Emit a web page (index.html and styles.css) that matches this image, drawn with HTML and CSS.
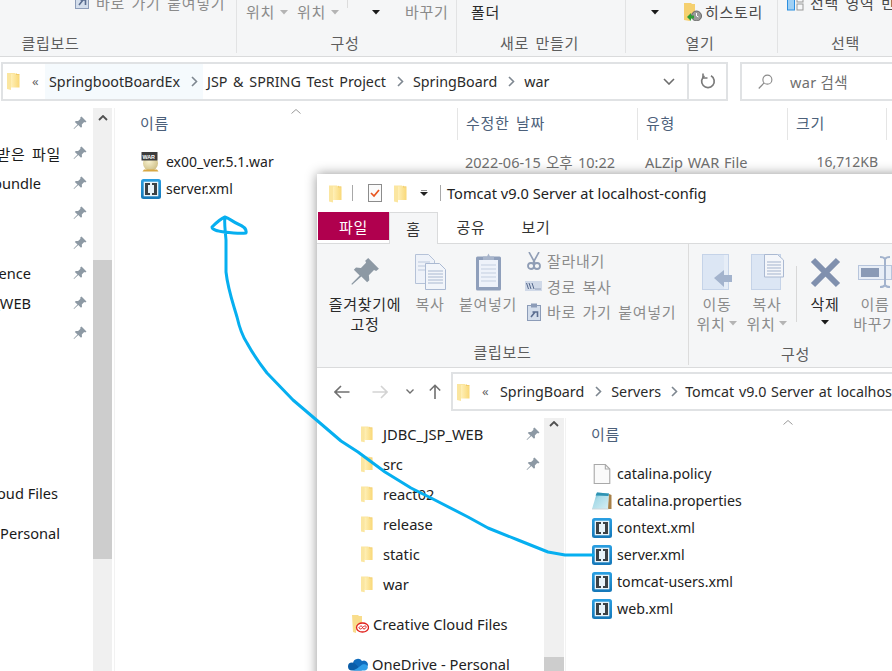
FILE: index.html
```html
<!DOCTYPE html>
<html lang="ko">
<head>
<meta charset="utf-8">
<title>Explorer windows</title>
<link rel="stylesheet" href="styles.css">
</head>
<body>
<svg class="defs" width="0" height="0" aria-hidden="true">
  <defs>
    <linearGradient id="fg" x1="0" x2="1" y1="0" y2="0"><stop offset="0" stop-color="#fff0b8"/><stop offset="1" stop-color="#f9d877"/></linearGradient>
    <linearGradient id="xb" x1="0" x2="0" y1="0" y2="1"><stop offset="0" stop-color="#2a9fe2"/><stop offset="1" stop-color="#1577b8"/></linearGradient>
    <linearGradient id="nb" x1="0" x2="1" y1="0" y2="1"><stop offset="0" stop-color="#3fa6c4"/><stop offset=".35" stop-color="#a9dbe8"/><stop offset="1" stop-color="#d8eff4"/></linearGradient>
    <radialGradient id="eg" cx=".4" cy=".35" r=".7"><stop offset="0" stop-color="#f8f2d0"/><stop offset="1" stop-color="#cdbd84"/></radialGradient>
    <symbol id="folder" viewBox="0 0 13 18">
      <path d="M0 1h8l1 1h3v13l-8 0v3l-4-1z" fill="#fbe6a0"/>
      <path d="M4 2h5l1 1h2.500v12.500H4z" fill="url(#fg)"/>
      <path d="M9 1v2h3.500v-1H10z" fill="#f2cc6a"/>
    </symbol>
    <symbol id="pin" viewBox="0 0 14 14">
      <path d="M8.500 0.500l5 5-1.300 1-1-.4-2.400 2.400.2 2.300-1 1-2.700-2.700L1 13l-.4-.4 3.900-4-2.700-2.700 1-1 2.300.2L7.500 2.700 7.100 1.700z" fill="#8d99a4"/>
    </symbol>
    <symbol id="xml" viewBox="0 0 20 20">
      <rect width="20" height="20" rx="2.500" fill="url(#xb)"/>
      <rect x="2.700" y="2.700" width="14.600" height="14.600" fill="#e9f3f9"/>
      <path d="M4 4h5v2H7v8h2v2H4z" fill="#3b4145"/>
      <path d="M16 4h-5v2h2v8h-2v2h5z" fill="#3b4145"/>
    </symbol>
    <symbol id="war" viewBox="0 0 20 20">
      <ellipse cx="9.500" cy="11.500" rx="7.500" ry="7.500" fill="url(#eg)"/>
      <path d="M3 17.500h13l1.500 2h-16z" fill="#d8a845"/>
      <rect x="0.500" y="0" width="16" height="8.500" fill="#3c3c3c"/>
      <text x="1.400" y="6.800" class="war-text">WAR</text>
    </symbol>
    <symbol id="doc" viewBox="0 0 15 18">
      <path d="M.5.500h10l4 4v13H.500z" fill="#fafafa" stroke="#a9a9a9"/>
      <path d="M10.500.500v4h4" fill="none" stroke="#a9a9a9"/>
    </symbol>
    <symbol id="note" viewBox="0 0 20 18">
      <path d="M5 0.500L17 1.500 16 17H0z" fill="url(#nb)"/>
      <path d="M5 0.500L17 1.500 16.500 4 3.500 3.500z" fill="#2f93b3"/>
      <path d="M17 2l2.500 1v14L16 17z" fill="#a8814a"/>
      <path d="M0 16.500h16.500v1H0z" fill="#cfd6da"/>
    </symbol>
    <symbol id="down" viewBox="0 0 8 5"><path d="M0 0h8L4 4.500z" fill="currentColor"/></symbol>
    <symbol id="chev" viewBox="0 0 7 11"><path d="M1 1l4.500 4.500L1 10" fill="none" stroke="#7e8790" stroke-width="1.600"/></symbol>
  </defs>
</svg>

<main class="screen">
  <section class="window back">
    <div class="ribbon-short">
      <div class="sgroup w236">
        <div class="sitems pl75">
          <svg class="ic-shortcut raise" viewBox="0 0 14 18"><rect x=".5" y="2.500" width="13" height="15" fill="#d4deec" stroke="#8c9cb8"/><rect x="4" y="0.500" width="6" height="4" fill="#8c9cb8"/><path d="M4 14l4-5H5.500h5v5" fill="none" stroke="#5a6d90" stroke-width="1.600"/></svg>
          <span class="tx dim raise ml7 wide">바로 가기 붙여넣기</span>
        </div>
        <div class="glabel clip">클립보드</div>
      </div>
      <div class="sgroup w220">
        <div class="sitems pl9">
          <span class="tx dim wide">위치</span><svg class="drop lt ml5"><use href="#down"/></svg>
          <span class="tx dim ml9 wide">위치</span><svg class="drop lt ml5"><use href="#down"/></svg>
          <span class="minisep"></span>
          <svg class="drop dk ml24"><use href="#down"/></svg>
          <span class="tx dim ml25 wide">바꾸기</span>
        </div>
        <div class="glabel">구성</div>
      </div>
      <div class="sgroup w169">
        <div class="sitems pl14"><span class="tx dark wide">폴더</span></div>
        <div class="glabel">새로 만들기</div>
      </div>
      <div class="sgroup w152">
        <div class="sitems pl25">
          <svg class="drop dk"><use href="#down"/></svg>
          <svg class="ic-history ml25" viewBox="0 0 18 18">
            <path d="M0 0h7l1 1h3v10H6v7l-6-1z" fill="#f5d06f"/>
            <circle cx="12.500" cy="13" r="5" fill="#9a9a9a" stroke="#666"/>
            <path d="M12.500 10v3l2 1" stroke="#fff" fill="none"/>
            <path d="M3 14l4-4v2.500h3v3H7V18z" fill="#2f9e35"/>
          </svg>
          <span class="tx mid ml3 wide">히스토리</span>
        </div>
        <div class="glabel">열기</div>
      </div>
      <div class="sgroup w138 nosep">
        <div class="sitems pl9">
          <svg class="ic-select" viewBox="0 0 17 11"><rect x=".5" y="-4" width="7" height="14" fill="#9fd0f5" stroke="#2d8fe0"/><rect x="10" y="-4" width="6" height="6" fill="none" stroke="#999"/><rect x="10" y="4" width="6" height="6" fill="none" stroke="#999"/></svg>
          <span class="tx mid raise ml6 wide">선택 영역 반전</span>
        </div>
        <div class="glabel">선택</div>
      </div>
    </div>

    <div class="navbar back-nav">
      <div class="address back-address">
        <svg class="fold-addr"><use href="#folder"/></svg>
        <span class="dbl">«</span>
        <span class="crumb-hover"><span class="crumb">SpringbootBoardEx</span><svg class="chev"><use href="#chev"/></svg></span>
        <span class="crumb ml4">JSP &amp; SPRING Test Project</span><svg class="chev cgap"><use href="#chev"/></svg>
        <span class="crumb">SpringBoard</span><svg class="chev cgap"><use href="#chev"/></svg>
        <span class="crumb">war</span>
        <span class="addr-end">
          <svg class="addr-drop" viewBox="0 0 12 7"><path d="M1 1l5 5 5-5" fill="none" stroke="#6d6d6d" stroke-width="1.600"/></svg>
          <span class="refresh">
            <svg viewBox="0 0 16 16" class="ic-refresh"><path d="M11 2.800A6.300 6.300 0 1 1 4.500 3" fill="none" stroke="#7a7a7a" stroke-width="1.700"/><path d="M3 .5v4.500h4.500" fill="none" stroke="#7a7a7a" stroke-width="1.600"/></svg>
          </span>
        </span>
      </div>
      <div class="search">
        <svg class="ic-search" viewBox="0 0 16 16"><circle cx="10" cy="6" r="4.800" fill="none" stroke="#8a8a8a" stroke-width="1.200"/><path d="M6.500 9.500L.8 15.500" stroke="#8a8a8a" stroke-width="1.300"/></svg>
        <span class="search-text">war 검색</span>
      </div>
    </div>

    <div class="main">
      <nav class="side back-side">
        <div class="srow"><span class="slabel"></span><svg class="pin"><use href="#pin"/></svg></div>
        <div class="srow"><span class="slabel ko">카카오톡 받은 파일</span><svg class="pin"><use href="#pin"/></svg></div>
        <div class="srow"><span class="slabel e41">Spring bundle</span><svg class="pin"><use href="#pin"/></svg></div>
        <div class="srow"><span class="slabel"></span><svg class="pin"><use href="#pin"/></svg></div>
        <div class="srow"><span class="slabel"></span><svg class="pin"><use href="#pin"/></svg></div>
        <div class="srow"><span class="slabel e30">Conference</span><svg class="pin"><use href="#pin"/></svg></div>
        <div class="srow"><span class="slabel e30">JDBC_JSP_WEB</span><svg class="pin"><use href="#pin"/></svg></div>
        <div class="srow"><span class="slabel"></span><svg class="pin"><use href="#pin"/></svg></div>
        <div class="srow mt130"><span class="slabel e58">Creative Cloud Files</span></div>
        <div class="srow mt10"><span class="slabel e60">OneDrive - Personal</span></div>
      </nav>
      <div class="scrollbar back-scroll">
        <div class="sb-up"><svg viewBox="0 0 10 6" class="sb-chev"><path d="M1 5l4-4 4 4" fill="none" stroke="#505050" stroke-width="1.800"/></svg></div>
        <div class="sb-thumb"></div>
      </div>
      <div class="pane back-pane">
        <div class="head">
          <svg class="sort back-sort" viewBox="0 0 10 5"><path d="M.5 4.500L5 .5l4.500 4" fill="none" stroke="#9a9a9a"/></svg>
          <span class="hcell hname">이름</span>
          <span class="hcell hdate">수정한 날짜</span>
          <span class="hcell htype">유형</span>
          <span class="hcell hsize">크기</span>
        </div>
        <div class="frow first">
          <svg class="ficon"><use href="#war"/></svg>
          <span class="fname">ex00_ver.5.1.war</span>
          <span class="fdate">2022-06-15 오후 10:22</span>
          <span class="ftype">ALZip WAR File</span>
          <span class="fsize">16,712KB</span>
        </div>
        <div class="frow">
          <svg class="ficon"><use href="#xml"/></svg>
          <span class="fname">server.xml</span>
        </div>
      </div>
    </div>
  </section>

  <section class="window front">
    <header class="titlebar">
      <svg class="t-folder"><use href="#folder"/></svg>
      <span class="tsep"></span>
      <svg class="t-check" viewBox="0 0 14 18"><rect x=".5" y=".5" width="13" height="17" fill="#fbfbfb" stroke="#8c8c8c"/><path d="M3 9l3 3 5-6" fill="none" stroke="#e8551f" stroke-width="1.700"/></svg>
      <svg class="t-folder t2"><use href="#folder"/></svg>
      <svg class="t-drop" viewBox="0 0 8 6"><path d="M1 0h6" stroke="#222"/><path d="M0 2h8L4 6z" fill="#222"/></svg>
      <span class="tsep s2"></span>
      <span class="ttitle">Tomcat v9.0 Server at localhost-config</span>
    </header>
    <div class="tabs">
      <span class="tab file">파일</span>
      <span class="tab home">홈</span>
      <span class="tab share">공유</span>
      <span class="tab view">보기</span>
    </div>
    <div class="ribbon-full">
      <div class="bgroup g1">
        <div class="bitems">
          <div class="bbtn b-pin">
            <div class="bicon"><svg class="i-bigpin"><use href="#pin"/></svg></div>
            <span class="blabel dark">즐겨찾기에<br>고정</span>
          </div>
          <div class="bbtn b-copy">
            <div class="bicon"><svg class="i-copy" viewBox="0 0 31 36">
              <path d="M.5.500h13l6 6v23H.500z" fill="#eef2f9" stroke="#b5c2d8"/><path d="M3 8h12M3 12h13M3 16h13" stroke="#bcc8dc"/>
              <path d="M10.500 9.500h14l6 6v20h-20z" fill="#f2f5fa" stroke="#aab9d2"/><path d="M13 17h15M13 20h15M13 23h15M13 26h15M13 29h15" stroke="#a9b8d0"/>
            </svg></div>
            <span class="blabel dim">복사</span>
          </div>
          <div class="bbtn b-paste">
            <div class="bicon"><svg class="i-paste" viewBox="0 0 27 38">
              <rect x="1" y="3.500" width="25" height="34" rx="1.500" fill="#8f9fbb"/>
              <rect x="4" y="7" width="19" height="27" fill="#eef2fa"/>
              <path d="M6 12h15M6 16h15M6 20h15M6 24h15M6 28h15" stroke="#c3cee0"/>
              <path d="M8 7V3.500h4L13.500.5 15 3.500h4V7z" fill="#a8b5cb"/>
            </svg></div>
            <span class="blabel dim">붙여넣기</span>
          </div>
          <div class="smalls">
            <div class="sm"><span class="smicon"><svg class="i-sc" viewBox="0 0 14 18"><path d="M2 0l6 11M12 0L6 11" stroke="#8f9db5" stroke-width="1.600" fill="none"/><circle cx="4" cy="14" r="3" fill="none" stroke="#8f9db5" stroke-width="1.800"/><circle cx="10" cy="14" r="3" fill="none" stroke="#8f9db5" stroke-width="1.800"/></svg></span><span class="smtext">잘라내기</span></div>
            <div class="sm"><span class="smicon"><svg class="i-path" viewBox="0 0 17 10"><rect width="17" height="10" fill="#d0d9e8"/><path d="M1.500 2l2 6M4 2l2 6M7 2l2 6" stroke="#54688c"/><path d="M10.500 8h1M12.500 8h1M14.500 8h1" stroke="#54688c"/></svg></span><span class="smtext">경로 복사</span></div>
            <div class="sm"><span class="smicon"><svg class="i-short" viewBox="0 0 14 18"><rect x=".5" y="2.500" width="13" height="15" fill="#d4deec" stroke="#8c9cb8"/><rect x="4" y="0.500" width="6" height="4" fill="#8c9cb8"/><path d="M4 14l4-5H5.500h5v5" fill="none" stroke="#5a6d90" stroke-width="1.600"/></svg></span><span class="smtext">바로 가기 붙여넣기</span></div>
          </div>
        </div>
        <div class="glabel low">클립보드</div>
      </div>
      <div class="bgroup g2">
        <div class="bitems pl3">
          <div class="bbtn b50">
            <div class="bicon"><svg class="i-move" viewBox="0 0 30 36"><rect x=".5" y=".5" width="26" height="35" fill="#dce6f4" stroke="#c5d3e8"/><path d="M22 .5h4.500v35H22" fill="#e6edf7" stroke="#c5d3e8"/><path d="M12 24L22 16v5h8v7h-8v5z" fill="#a3b3cd"/></svg></div>
            <span class="blabel dim">이동<br><span class="w-drop">위치<svg class="drop lt abs"><use href="#down"/></svg></span></span>
          </div>
          <div class="bbtn b50">
            <div class="bicon"><svg class="i-move wider" viewBox="0 0 33 36"><rect x=".5" y=".5" width="29" height="35" fill="#dce6f4" stroke="#c5d3e8"/><path d="M13.500.5h13l6 5.500v17h-19z" fill="#f4f6fa" stroke="#aab9d2"/><path d="M16 8h14M16 11h14M16 14h14M16 17h14M16 20h14" stroke="#a3b3cd"/></svg></div>
            <span class="blabel dim">복사<br><span class="w-drop">위치<svg class="drop lt abs"><use href="#down"/></svg></span></span>
          </div>
          <span class="innersep"></span>
          <div class="bbtn b48">
            <div class="bicon"><svg class="i-x" viewBox="0 0 31 31"><path d="M3 3l25 25M28 3L3 28" stroke="#8090ae" stroke-width="6"/></svg></div>
            <span class="blabel dark">삭제<br><svg class="drop dk center"><use href="#down"/></svg></span>
          </div>
          <div class="bbtn b48 ml2">
            <div class="bicon"><svg class="i-ren" viewBox="0 0 36 32"><rect x=".5" y="9.500" width="33" height="14" fill="#e8eef7" stroke="#b7c5dc"/><rect x="3" y="12" width="18" height="9" fill="#8a9ab6"/><path d="M22 1q4 0 5 2 1-2 5-2M27 3v26M22 31q4 0 5-2 1 2 5 2" fill="none" stroke="#a3b3cd" stroke-width="2"/></svg></div>
            <span class="blabel dim">이름<br>바꾸기</span>
          </div>
        </div>
        <div class="glabel low">구성</div>
      </div>
    </div>

    <div class="navbar front-nav">
      <svg class="n-back" viewBox="0 0 16 14"><path d="M15.500 7H1.500M7 1L1 7l6 6" fill="none" stroke="#707070" stroke-width="1.600"/></svg>
      <svg class="n-fwd" viewBox="0 0 16 14"><path d="M.5 7h14M9 1l6 6-6 6" fill="none" stroke="#d3d3d3" stroke-width="1.600"/></svg>
      <svg class="n-dd" viewBox="0 0 8 5"><path d="M.5.5L4 4 7.500.5" fill="none" stroke="#707070" stroke-width="1.400"/></svg>
      <svg class="n-up" viewBox="0 0 12 15"><path d="M6 15V1.500M.8 6.500L6 1.300l5.200 5.200" fill="none" stroke="#707070" stroke-width="1.600"/></svg>
      <div class="address front-address">
        <svg class="fold-addr"><use href="#folder"/></svg>
        <span class="dbl dbl-f">«</span>
        <span class="crumb">SpringBoard</span><svg class="chev cgap"><use href="#chev"/></svg>
        <span class="crumb">Servers</span><svg class="chev cgap tight"><use href="#chev"/></svg>
        <span class="crumb plain">Tomcat v9.0 Server at localhost-config</span>
      </div>
    </div>

    <div class="main">
      <nav class="side front-side">
        <div class="frontrow"><svg class="sfolder"><use href="#folder"/></svg><span class="sname">JDBC_JSP_WEB</span><svg class="pin push"><use href="#pin"/></svg></div>
        <div class="frontrow"><svg class="sfolder"><use href="#folder"/></svg><span class="sname">src</span><svg class="pin push"><use href="#pin"/></svg></div>
        <div class="frontrow"><svg class="sfolder"><use href="#folder"/></svg><span class="sname">react02</span></div>
        <div class="frontrow"><svg class="sfolder"><use href="#folder"/></svg><span class="sname">release</span></div>
        <div class="frontrow"><svg class="sfolder"><use href="#folder"/></svg><span class="sname">static</span></div>
        <div class="frontrow"><svg class="sfolder"><use href="#folder"/></svg><span class="sname">war</span></div>
        <div class="frontrow top mt10">
          <svg class="ccicon" viewBox="0 0 17 18"><path d="M0 0h6l1 1h3v10H4v7l-3-1z" fill="#f9dd8c"/><ellipse cx="10.500" cy="12.500" rx="6" ry="4.500" fill="#fff" stroke="#e0201b" stroke-width="1.300"/><path d="M7 12.500c1.500-2 3-2 3.500 0s2.500 2 3.500 0-2-2-3.500 0-3 2-3.500 0z" fill="none" stroke="#e0201b"/></svg>
          <span class="sname g5">Creative Cloud Files</span>
        </div>
        <div class="frontrow top mt10">
          <svg class="odicon" viewBox="0 0 20 14"><path d="M5 6a5 5 0 0 1 9-2 4 4 0 0 1 5 6l-11 1z" fill="#0f6cbd"/><path d="M4 13.500a4 4 0 0 1 0-8 5 5 0 0 1 4 2l6 6z" fill="#0a5da8"/><path d="M5 13.500h12a3 3 0 0 0 2-5c-2-2-5-1-6 0l-4 3z" fill="#2f9ee8"/></svg>
          <span class="sname g5">OneDrive - Personal</span>
        </div>
      </nav>
      <div class="scrollbar front-scroll">
        <div class="sb-up"><svg viewBox="0 0 10 6" class="sb-chev"><path d="M1 5l4-4 4 4" fill="none" stroke="#505050" stroke-width="1.800"/></svg></div>
        <div class="sb-thumb2"></div>
      </div>
      <div class="pane front-pane">
        <div class="fhead">
          <svg class="sort front-sort" viewBox="0 0 10 5"><path d="M.5 4.500L5 .5l4.500 4" fill="none" stroke="#9a9a9a"/></svg>
          <span class="hcell">이름</span>
        </div>
        <div class="ffrow"><svg class="ficon2 sm-doc"><use href="#doc"/></svg><span class="fname2">catalina.policy</span></div>
        <div class="ffrow"><svg class="ficon2"><use href="#note"/></svg><span class="fname2">catalina.properties</span></div>
        <div class="ffrow"><svg class="ficon2"><use href="#xml"/></svg><span class="fname2">context.xml</span></div>
        <div class="ffrow"><svg class="ficon2"><use href="#xml"/></svg><span class="fname2">server.xml</span></div>
        <div class="ffrow"><svg class="ficon2"><use href="#xml"/></svg><span class="fname2">tomcat-users.xml</span></div>
        <div class="ffrow"><svg class="ficon2"><use href="#xml"/></svg><span class="fname2">web.xml</span></div>
      </div>
    </div>
  </section>

  <svg class="scribble" viewBox="0 0 892 671" aria-hidden="true">
    <path d="M225 217C220 219 215 224 212 227 212 230 218 231 224 232 232 233 240 234 246 233 247 229 243 226 238 224 233 222 229 218 225 217 224 222 225 228 226 240L226 272C228 290 233 303 237 317 240 330 243 337 247 343 253 354 260 364 267 373L293 400 320 423 341 441 358 452 385 472 411 488 431 498 468 517 488 528 518 540 548 552 565 555H593"/>
  </svg>
</main>
</body>
</html>
```

FILE: styles.css
```css
* { box-sizing: border-box; }
html, body { margin: 0; padding: 0; background: #fff; }
body { font-family: "Noto Sans", "Noto Sans CJK KR", sans-serif; font-size: 14px; color: #1a1a1a; }
.defs { position: absolute; }
.war-text { font: 700 5.400px "Liberation Sans", sans-serif; fill: #fff; }

.screen { position: relative; width: 892px; height: 671px; overflow: hidden; background: #fff; }
.window { position: absolute; display: flex; flex-direction: column; background: #fff; }
.back { left: 0; top: 0; width: 892px; height: 671px; }
.front { left: 317px; top: 174px; width: 640px; height: 520px; box-shadow: 0 0 11px rgba(0,0,0,.42); }
.scribble { position: absolute; left: 0; top: 0; width: 892px; height: 671px; pointer-events: none; }
.scribble path { fill: none; stroke: #06aff0; stroke-width: 3; stroke-linejoin: round; stroke-linecap: round; }

/* back ribbon */
.ribbon-short { display: flex; flex: none; height: 57px; background: #f5f6f7; border-bottom: 1px solid #dadbdc; }
.sgroup { display: flex; flex-direction: column; flex: none; height: 53px; border-right: 1px solid #e2e3e4; }
.sgroup.nosep { border-right: 0; }
.w236 { width: 237px; }
.w220 { width: 220px; }
.w169 { width: 169px; }
.w152 { width: 152px; }
.w138 { width: 138px; }
.sitems { display: flex; align-items: flex-start; height: 33px; line-height: 24px; overflow: visible; white-space: nowrap; }
.pl75 { padding-left: 75px; }
.pl9 { padding-left: 9px; }
.pl14 { padding-left: 14px; }
.pl25 { padding-left: 25px; }
.pl3 { padding-left: 3px; }
.glabel { height: 20px; line-height: 20px; text-align: center; color: #5d5d5d; font-size: 15px; letter-spacing: .7px; word-spacing: 2px; padding-right: 3px; }
.glabel.clip { padding-right: 135px; }
.glabel.low { margin-top: auto; margin-bottom: 3px; padding-right: 0; }
.tx { font-size: 15px; white-space: nowrap; }
.wide { letter-spacing: .7px; word-spacing: 2px; }
.dim { color: #8b8b8b; }
.dark { color: #2a2a2a; }
.mid { color: #4a4a4a; }
.raise { margin-top: -9px; }
.ml2 { margin-left: 2px; }
.ml3 { margin-left: 3px; }
.ml5 { margin-left: 5px; }
.ml6 { margin-left: 6px; }
.ml7 { margin-left: 7px; }
.ml9 { margin-left: 9px; }
.ml24 { margin-left: 24px; }
.ml25 { margin-left: 25px; }
.ml4 { margin-left: 4px; }
.mt10 { margin-top: 10px; }
.mt130 { margin-top: 130px; }
.ic-shortcut { width: 14px; height: 18px; flex: none; }
.ic-history { width: 18px; height: 18px; margin-top: 3px; flex: none; }
.ic-select { width: 17px; height: 11px; flex: none; }
.drop { width: 8px; height: 5px; flex: none; margin-top: 10px; }
.drop.lt { color: #b4b4b4; }
.drop.dk { color: #1a1a1a; }
.drop.abs { position: absolute; left: 33px; top: 7px; margin: 0; }
.drop.center { margin: 6px auto 0; display: block; }
.minisep { width: 1px; height: 8px; margin-left: 8px; background: #dcdcdc; flex: none; }

/* nav bars */
.navbar { display: flex; flex: none; align-items: center; background: #fff; }
.back-nav { height: 51px; padding: 0 0 3px 1px; }
.address { display: flex; align-items: center; height: 39px; border: 2px solid #e0e2e4; background: #fff; color: #2b2b2b; white-space: nowrap; overflow: hidden; flex: none; }
.back-address { width: 727px; padding-left: 4px; }
.fold-addr { width: 13px; height: 18px; flex: none; }
.dbl { margin-left: 12px; width: 13px; color: #666; font-size: 13px; line-height: 1; flex: none; }
.dbl-f { width: 18px; margin-left: 12px; }
.crumb { font-size: 14.300px; word-spacing: 2px; flex: none; }
.crumb.plain { word-spacing: 1px; }
.crumb-hover { display: flex; align-items: center; height: 35px; background: #f5fafd; margin-left: 0; padding-left: 4px; width: 158px; flex: none; }
.chev { width: 7px; height: 11px; flex: none; margin-left: 11px; }
.cgap { margin-right: 9px; }
.chev.tight { margin-left: 10px; margin-right: 7px; }
.addr-end { display: flex; align-items: center; margin-left: auto; height: 35px; }
.addr-drop { width: 12px; height: 7px; margin-right: 12px; }
.refresh { display: flex; align-items: center; justify-content: center; width: 39px; height: 37px; border-left: 2px solid #e0e2e4; }
.ic-refresh { width: 16px; height: 16px; }
.search { display: flex; align-items: center; height: 39px; margin-left: 12px; flex: 1; border: 2px solid #e0e2e4; border-right: 0; padding-left: 16px; }
.ic-search { width: 15px; height: 15px; flex: none; }
.search-text { margin-left: 17px; font-size: 14.500px; color: #6f6f6f; letter-spacing: .3px; }

/* back body */
.main { display: flex; flex: 1; min-height: 0; }
.side { flex: none; overflow: hidden; }
.back-side { width: 93px; }
.srow { display: flex; height: 30px; align-items: center; }
.slabel { width: 73px; display: flex; justify-content: flex-end; overflow: hidden; white-space: nowrap; padding-right: 12px; font-size: 14.600px; }
.slabel.ko { font-size: 15px; letter-spacing: .7px; word-spacing: 2px; }
.e41 { width: 73px; padding-right: 32px; }
.e30 { padding-right: 42px; }
.e58 { padding-right: 15px; }
.e60 { padding-right: 13px; }
.pin { width: 14px; height: 14px; flex: none; }
.scrollbar { flex: none; background: #f0f0f0; }
.back-scroll { width: 19px; display: flex; flex-direction: column; }
.sb-up { height: 20px; display: flex; align-items: center; justify-content: center; }
.sb-chev { width: 10px; height: 6px; }
.sb-thumb { height: 299px; margin-top: 132px; background: #cdcdcd; }
.pane { flex: 1; min-width: 0; }
.back-pane { border-left: 1px solid #f2f2f2; margin-left: 2px; }
.head { position: relative; display: flex; height: 32px; align-items: flex-start; }
.sort { position: absolute; width: 10px; height: 5px; top: 0; }
.back-sort { left: 176px; top: 1px; }
.hcell { color: #4c607a; font-size: 15px; letter-spacing: .7px; word-spacing: 2px; line-height: 30px; }
.hname { width: 342px; padding-left: 25px; flex: none; }
.hdate, .htype, .hsize { border-left: 1px solid #e5e5e5; height: 32px; padding-left: 8px; flex: none; }
.hdate { width: 180px; }
.htype { width: 150px; }
.hsize { width: 100px; border-right: 1px solid #e5e5e5; }
.frow { display: flex; align-items: center; height: 27px; padding-left: 26px; white-space: nowrap; }
.first { margin-top: 8px; }
.ficon { width: 20px; height: 20px; flex: none; }
.fname { margin-left: 5px; width: 299px; flex: none; font-size: 14px; color: #222; }
.fdate { width: 180px; flex: none; color: #707070; font-size: 14.500px; word-spacing: 1.500px; }
.ftype { width: 140px; flex: none; color: #707070; font-size: 14.600px; word-spacing: 1px; }
.fsize { width: 93px; text-align: right; flex: none; color: #707070; font-size: 14px; }

/* front title and tabs */
.titlebar { display: flex; flex: none; align-items: center; height: 38px; padding-left: 12px; }
.t-folder { width: 13px; height: 19px; flex: none; }
.t2 { margin-left: 12px; }
.tsep { width: 1px; height: 16px; margin-left: 10px; background: #a8a8a8; flex: none; }
.s2 { margin-left: 12px; }
.t-check { width: 14px; height: 18px; margin-left: 15px; flex: none; }
.t-drop { width: 8px; height: 6px; margin-left: 13px; flex: none; }
.ttitle { margin-left: 6px; font-size: 14.600px; color: #222; white-space: nowrap; }
.tabs { display: flex; flex: none; height: 32px; border-bottom: 1px solid #dadbdc; }
.tab { display: flex; align-items: center; justify-content: center; font-size: 15px; letter-spacing: .7px; color: #333; }
.file { width: 71px; height: 28px; margin-left: 1px; background: #b0004e; color: #fff; }
.home { width: 49px; height: 32px; background: #f5f6f7; border: 1px solid #dadbdc; border-bottom: 0; }
.share { width: 66px; height: 29px; }
.view { width: 64px; height: 29px; }

/* front ribbon */
.ribbon-full { display: flex; flex: none; height: 124px; background: #f5f6f7; border-bottom: 1px solid #dadbdc; }
.bgroup { display: flex; flex-direction: column; }
.g1 { width: 372px; margin-bottom: 2px; border-right: 1px solid #dcdcdc; }
.g2 { width: 213px; }
.bitems { display: flex; padding-top: 6px; }
.g1 .bitems { padding-left: 9px; }
.bbtn { display: flex; flex-direction: column; align-items: center; flex: none; }
.bicon { display: flex; align-items: center; justify-content: center; height: 44px; }
.blabel { font-size: 15px; line-height: 20px; text-align: center; letter-spacing: .7px; white-space: nowrap; }
.w-drop { position: relative; display: inline-block; margin-right: 12px; }
.b-pin { width: 78px; }
.b-copy { width: 44px; margin-left: 4px; }
.b-paste { width: 58px; margin-left: 7px; }
.b50 { width: 50px; }
.b48 { width: 48px; }
.i-bigpin { width: 30px; height: 30px; }
.i-copy { width: 31px; height: 36px; }
.i-paste { width: 27px; height: 38px; }
.i-move { width: 30px; height: 36px; }
.i-move.wider { width: 33px; }
.i-x { width: 31px; height: 31px; }
.i-ren { width: 36px; height: 32px; margin-left: 2px; }
.smalls { display: flex; flex-direction: column; margin-left: 8px; margin-top: -2px; }
.sm { display: flex; align-items: center; height: 25.500px; white-space: nowrap; }
.smicon { display: flex; width: 22px; justify-content: center; padding-right: 5px; flex: none; }
.smtext { color: #8b8b8b; font-size: 15px; letter-spacing: .7px; word-spacing: 2px; }
.i-sc { width: 14px; height: 18px; }
.i-path { width: 17px; height: 10px; }
.i-short { width: 14px; height: 18px; }
.innersep { width: 1px; height: 56px; margin: 16px 4px 0; background: #d8d8d8; flex: none; }

/* front nav */
.front-nav { height: 50px; padding-bottom: 3px; }
.n-back { width: 16px; height: 14px; margin-left: 17px; flex: none; }
.n-fwd { width: 16px; height: 14px; margin-left: 22px; flex: none; }
.n-dd { width: 8px; height: 5px; margin-left: 18px; flex: none; }
.n-up { width: 12px; height: 15px; margin-left: 15px; flex: none; }
.front-address { width: 480px; margin-left: 10px; padding-left: 4px; height: 39px; }

/* front body */
.front-side { width: 227px; padding-top: 1px; }
.frontrow { display: flex; align-items: center; height: 30px; padding-left: 44px; }
.frontrow.top { padding-left: 35px; }
.sfolder { width: 12px; height: 18px; flex: none; }
.sname { margin-left: 10px; font-size: 14.700px; color: #222; white-space: nowrap; }
.sname.g5 { margin-left: 4px; }
.push { margin-left: auto; margin-right: 4px; }
.ccicon { width: 17px; height: 18px; flex: none; }
.odicon { width: 20px; height: 14px; margin-left: -4px; flex: none; }
.front-scroll { width: 20px; display: flex; flex-direction: column; }
.sb-thumb2 { height: 60px; margin-top: 226px; background: #cdcdcd; }
.front-pane { border-left: 1px solid #f2f2f2; margin-left: 1px; position: relative; }
.fhead { height: 42px; padding: 6px 0 0 25px; }
.fhead .hcell { line-height: 20px; }
.front-sort { left: 217px; top: 2px; }
.ffrow { display: flex; align-items: center; height: 27px; padding-left: 26px; white-space: nowrap; }
.ficon2 { width: 20px; height: 20px; flex: none; }
.fname2 { margin-left: 5px; font-size: 14.200px; color: #222; }
```
